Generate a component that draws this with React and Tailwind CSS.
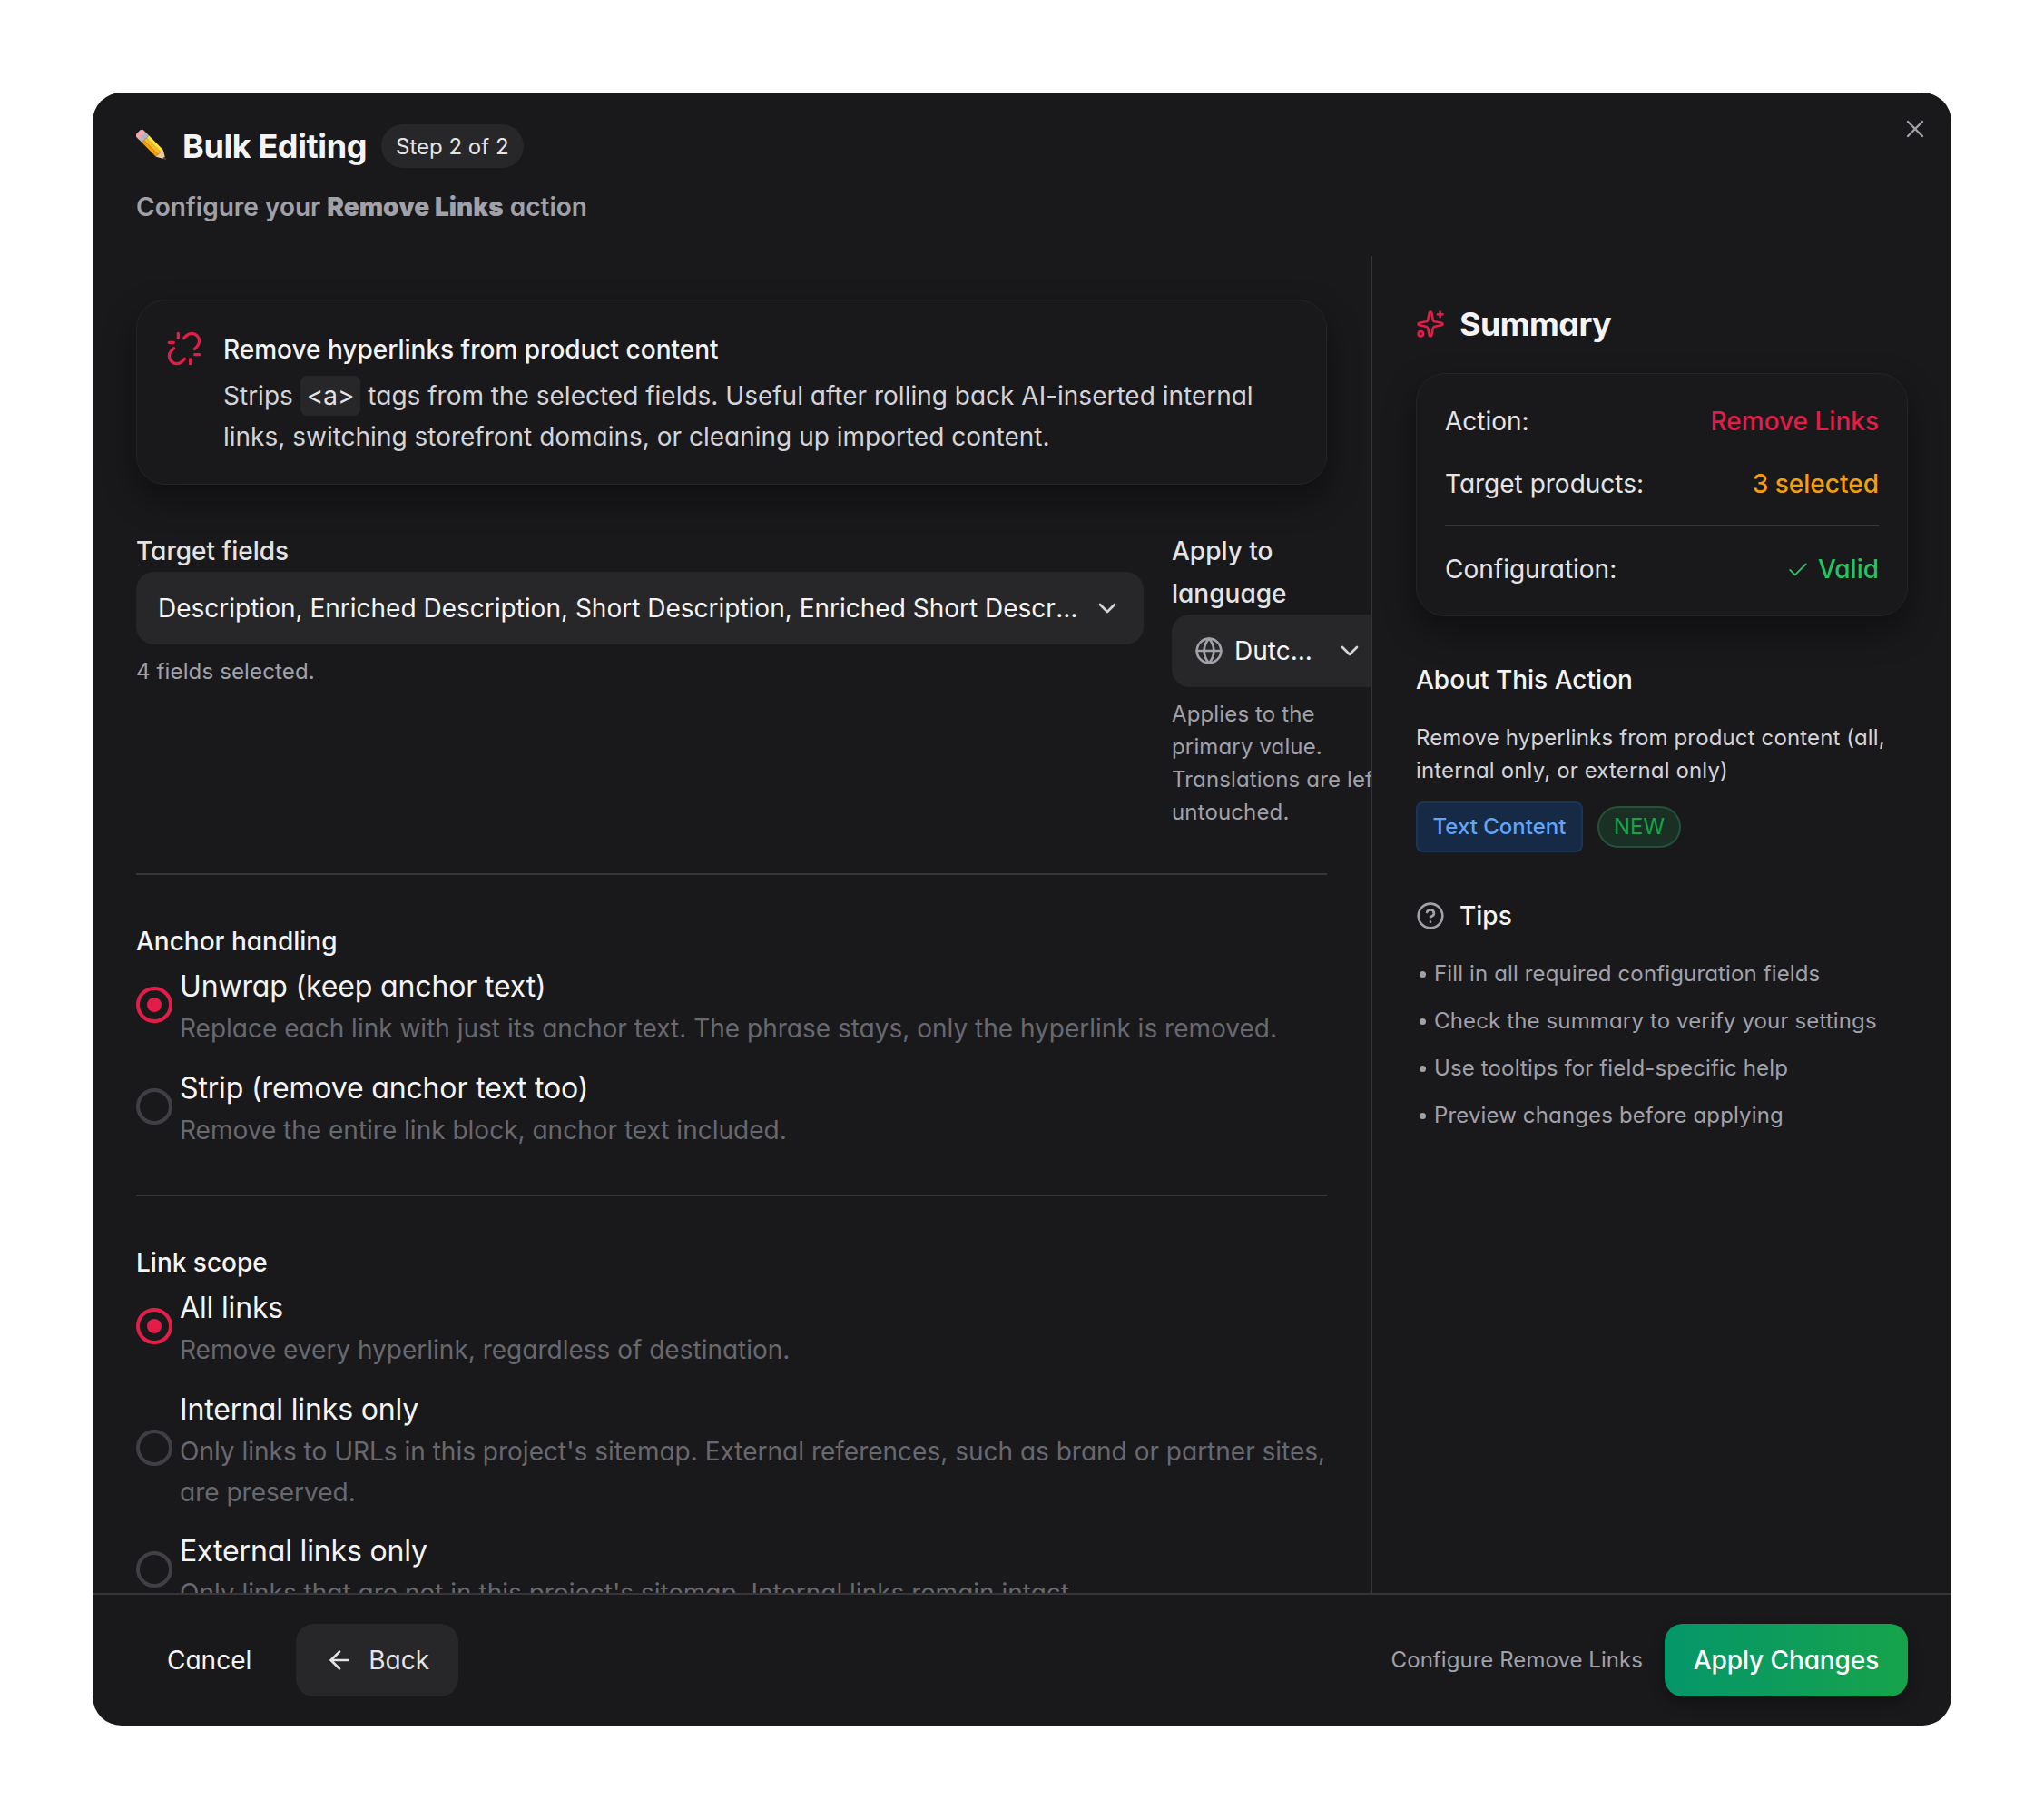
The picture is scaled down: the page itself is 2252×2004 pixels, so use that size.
import React from "react";
import { X, Unlink, ChevronDown, Globe, Sparkles, Check, CircleHelp, ArrowLeft } from "lucide-react";

function Pencil() {
  return (
    <svg width="36" height="36" viewBox="0 0 36 36" className="shrink-0">
      <g transform="rotate(45 18 18)">
        <rect x="-4" y="12.5" width="8" height="11" rx="2.5" fill="#f4a6ad" />
        <rect x="2" y="12.5" width="5" height="11" fill="#b4b4bc" />
        <rect x="7" y="12.5" width="22" height="3.6" fill="#fde047" />
        <rect x="7" y="16.1" width="22" height="3.8" fill="#fbbf24" />
        <rect x="7" y="19.9" width="22" height="3.6" fill="#f59e0b" />
        <path d="M29 12.5 L29 23.5 L38.5 18 Z" fill="#f3c9a0" />
        <path d="M35.5 16.3 L35.5 19.7 L38.5 18 Z" fill="#3f3f46" />
      </g>
    </svg>
  );
}

function Radio({ checked, title, desc }) {
  return (
    <div className="flex items-center gap-[8px]">
      <div
        className={
          "w-[40px] h-[40px] mb-[5px] rounded-full shrink-0 border-[4px] flex items-center justify-center " +
          (checked ? "border-[#e11d48]" : "border-[#3f3f46]")
        }
      >
        {checked && <div className="w-[16px] h-[16px] rounded-full bg-[#e11d48]" />}
      </div>
      <div className="min-w-0">
        <div className="text-[32px] leading-[47px] tracking-[-0.15px] text-[#f4f4f5]">{title}</div>
        <div className="text-[28px] leading-[45px] mt-[1px] text-[#68686f]">{desc}</div>
      </div>
    </div>
  );
}

function Row({ label, children }) {
  return (
    <div className="flex items-center justify-between leading-[45px]">
      <span className="text-[#e4e4e7]">{label}</span>
      {children}
    </div>
  );
}

export default function App() {
  return (
    <div className="bg-white w-[2252px] h-[2004px] pt-[102px] pl-[102px] font-['Inter',sans-serif] [font-feature-settings:'cv11'] text-[#f4f4f5]">
      <div className="w-[2048px] h-[1799px] bg-[#19191c] rounded-[32px] flex flex-col overflow-hidden relative">
        <X className="absolute top-[24px] right-[24px] text-[#a1a1aa]" size={32} strokeWidth={1.8} />
        <div className="h-[180px] shrink-0 px-[48px] pt-[35px]">
          <div className="flex items-center">
            <Pencil />
            <span className="ml-[15px] text-[36px] leading-[48px] font-bold tracking-[-0.4px] text-[#f4f4f5]">Bulk Editing</span>
            <span className="ml-[16px] h-[48px] px-[16px] pt-[1px] rounded-full bg-[#27272a] flex items-center text-[24px] text-[#e4e4e7]">Step 2 of 2</span>
          </div>
          <div className="mt-[21px] text-[28px] leading-[44px] font-semibold text-[#a1a1aa]">
            Configure your <span className="font-black">Remove Links</span> action
          </div>
        </div>

        <div className="flex flex-1 min-h-0">
          <div className="w-[1408px] shrink-0 pl-[48px] pr-[48px] pt-[48px] overflow-hidden">
            <div className="h-[204px] rounded-[32px] border border-[#242427] bg-[#19191c] shadow-[0_16px_36px_rgba(0,0,0,0.4)] pl-[32px] pr-[32px] pt-[32px] flex gap-[23px]">
              <Unlink size={40} strokeWidth={2} className="text-[#e11d48] shrink-0 mt-[1px]" />
              <div className="min-w-0">
                <div className="text-[28px] leading-[45px] font-medium text-[#f4f4f5]">Remove hyperlinks from product content</div>
                <div className="mt-[6px] text-[28px] leading-[45px] text-[#d4d4d8]">
                  Strips <code className="font-['Inter'] bg-[#27272a] rounded-[8px] px-[7px] py-[5px] text-[#e4e4e7]">&lt;a&gt;</code> tags from the selected fields. Useful after rolling back AI-inserted internal links, switching storefront domains, or cleaning up imported content.
                </div>
              </div>
            </div>

            <div className="flex gap-[31px] mt-[50px] w-[1380px] h-[378px]">
              <div className="w-[1110px] shrink-0">
                <div className="text-[28px] leading-[46px] font-medium text-[#e4e4e7]">Target fields</div>
                <div className="h-[80px] bg-[#27272a] rounded-[20px] flex items-center pl-[24px] pr-[24px]">
                  <span className="flex-1 min-w-0 truncate text-[28px]">Description, Enriched Description, Short Description, Enriched Short Description</span>
                  <ChevronDown size={32} className="ml-[13px] shrink-0 text-[#d4d4d8]" />
                </div>
                <div className="mt-[12px] text-[24px] leading-[36px] tracking-[0.14px] text-[#a1a1aa]">4 fields selected.</div>
              </div>
              <div className="w-[236px] shrink-0">
                <div className="text-[28px] leading-[47px] font-medium text-[#e4e4e7]">Apply to language</div>
                <div className="h-[80px] mt-[-1px] bg-[#27272a] rounded-[20px] flex items-center pl-[25px] pr-[24px]">
                  <Globe size={32} strokeWidth={2} className="shrink-0 text-[#a1a1aa]" />
                  <span className="ml-[12px] flex-1 text-[28px] text-[#f4f4f5]">Dutc...</span>
                  <ChevronDown size={32} className="shrink-0 text-[#d4d4d8]" />
                </div>
                <div className="mt-[12px] text-[24px] leading-[36px] tracking-[0.14px] text-[#a1a1aa]">Applies to the primary value. Translations are left untouched.</div>
              </div>
            </div>

            <div className="h-[2px] bg-[#35353a]" />

            <div className="mt-[50px] text-[28px] leading-[46px] font-medium text-[#f4f4f5]">Anchor handling</div>
            <div className="flex flex-col gap-[19px] mt-[3px]">
              <Radio checked title="Unwrap (keep anchor text)" desc="Replace each link with just its anchor text. The phrase stays, only the hyperlink is removed." />
              <Radio title="Strip (remove anchor text too)" desc="Remove the entire link block, anchor text included." />
            </div>

            <div className="h-[2px] bg-[#35353a] mt-[48px]" />

            <div className="mt-[50px] text-[28px] leading-[46px] font-medium text-[#f4f4f5]">Link scope</div>
            <div className="flex flex-col gap-[18.5px] mt-[3px]">
              <Radio checked title="All links" desc="Remove every hyperlink, regardless of destination." />
              <Radio title="Internal links only" desc="Only links to URLs in this project's sitemap. External references, such as brand or partner sites, are preserved." />
              <Radio title="External links only" desc="Only links that are not in this project's sitemap. Internal links remain intact." />
            </div>
          </div>

          <div className="flex-1 border-l-2 border-[#35353a] pl-[48px] pr-[48px] pt-[48px] min-w-0">
            <div className="flex items-center h-[54px]">
              <Sparkles size={32} strokeWidth={2} className="text-[#e11d48] shrink-0" />
              <span className="ml-[16px] text-[36px] font-bold tracking-[-0.6px] text-[#f4f4f5]">Summary</span>
            </div>
            <div className="mt-[27px] h-[268px] rounded-[32px] border border-[#242427] bg-[#19191c] shadow-[0_16px_36px_rgba(0,0,0,0.4)] px-[31px] pt-[30px] text-[28px]">
              <Row label="Action:"><span className="text-[#e11d48] font-medium">Remove Links</span></Row>
              <div className="mt-[24px]"><Row label="Target products:"><span className="text-[#f59e0b] font-medium">3 selected</span></Row></div>
              <div className="h-[2px] bg-[#35353a] mt-[22px]" />
              <div className="mt-[25px]"><Row label="Configuration:"><span className="flex items-center text-[#22c55e] font-medium"><Check size={26} strokeWidth={1.8} className="mr-[9px]" />Valid</span></Row></div>
            </div>
            <div className="mt-[48px] text-[28px] leading-[44px] font-medium text-[#f4f4f5]">About This Action</div>
            <div className="mt-[24px] text-[24px] leading-[36px] tracking-[0.14px] text-[#d4d4d8]">Remove hyperlinks from product content (all, internal only, or external only)</div>
            <div className="flex items-center mt-[16px]">
              <span className="h-[56px] px-[16.5px] rounded-[8px] bg-[#172a45] border-2 border-[#1c3557] flex items-center text-[24px] font-medium text-[#60a5fa]">Text Content</span>
              <span className="ml-[16px] h-[46px] px-[16px] rounded-full bg-[#1a3024] border-2 border-[#25503a] flex items-center text-[24px] text-[#16a34a]">NEW</span>
            </div>
            <div className="flex items-center mt-[48px] h-[44px]">
              <CircleHelp size={32} strokeWidth={2} className="text-[#a1a1aa] shrink-0" />
              <span className="ml-[16px] text-[28px] font-medium text-[#f4f4f5]">Tips</span>
            </div>
            <div className="mt-[24px] flex flex-col gap-[16px] text-[24px] leading-[36px] tracking-[0.14px] text-[#a1a1aa]">
              {["Fill in all required configuration fields", "Check the summary to verify your settings", "Use tooltips for field-specific help", "Preview changes before applying"].map((t) => (
                <div key={t} className="flex items-center">
                  <span className="w-[7px] h-[7px] rounded-full bg-[#a1a1aa] ml-[4px] mr-[9px] shrink-0" />
                  {t}
                </div>
              ))}
            </div>
          </div>
        </div>

        <div className="h-[146px] shrink-0 border-t-2 border-[#35353a] flex items-center pl-[48px] pr-[48px]">
          <button className="px-[34px] h-[80px] text-[28px] text-[#f4f4f5]">Cancel</button>
          <button className="h-[80px] ml-[15px] px-[32px] rounded-[20px] bg-[#27272a] flex items-center text-[28px] text-[#e4e4e7]">
            <ArrowLeft size={32} strokeWidth={2} className="mr-[16px]" />Back
          </button>
          <span className="ml-auto mr-[24px] text-[24px] tracking-[0.05px] text-[#a1a1aa]">Configure Remove Links</span>
          <button className="h-[80px] w-[268px] rounded-[20px] bg-gradient-to-r from-[#059669] to-[#16a34a] shadow-[0_8px_16px_rgba(0,0,0,0.25)] text-[28px] tracking-[-0.1px] font-medium text-white">Apply Changes</button>
        </div>
      </div>
    </div>
  );
}
